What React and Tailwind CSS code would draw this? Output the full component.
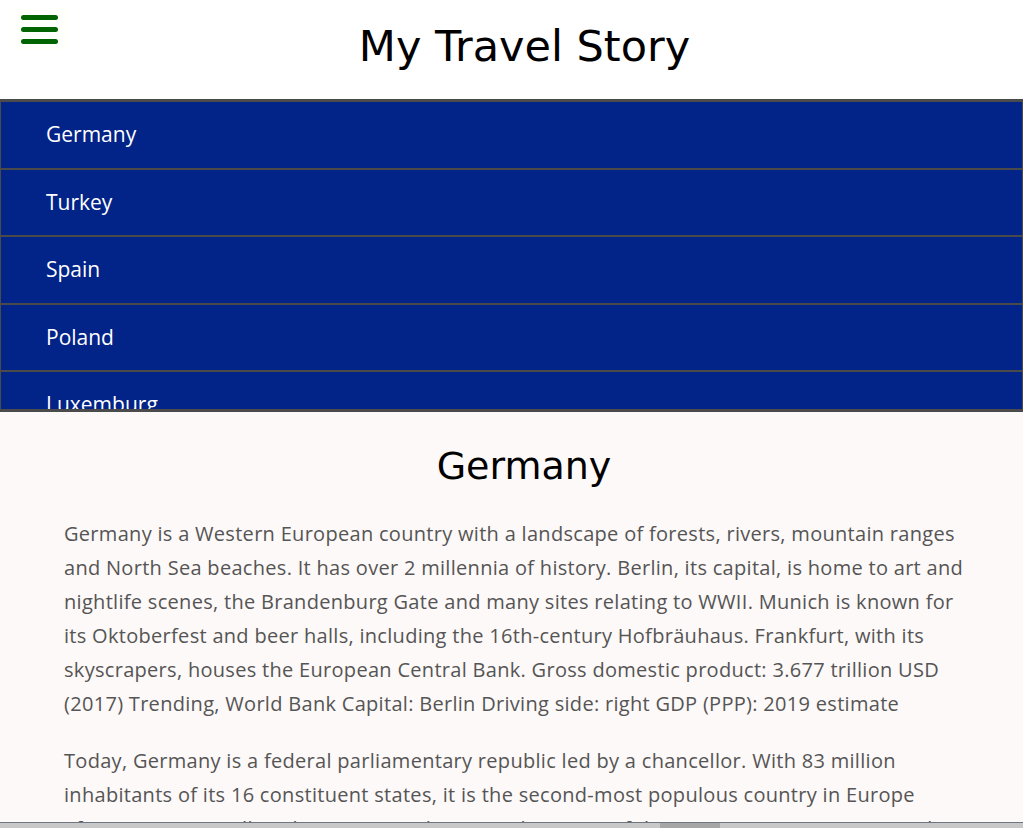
import React from 'react';

const countries = ['Germany', 'Turkey', 'Spain', 'Poland', 'Luxemburg', 'France', 'Italy'];

const paragraphs = [
  'Germany is a Western European country with a landscape of forests, rivers, mountain ranges and North Sea beaches. It has over 2 millennia of history. Berlin, its capital, is home to art and nightlife scenes, the Brandenburg Gate and many sites relating to WWII. Munich is known for its Oktoberfest and beer halls, including the 16th-century Hofbräuhaus. Frankfurt, with its skyscrapers, houses the European Central Bank. Gross domestic product: 3.677 trillion USD (2017) Trending, World Bank Capital: Berlin Driving side: right GDP (PPP): 2019 estimate',
  'Today, Germany is a federal parliamentary republic led by a chancellor. With 83 million inhabitants of its 16 constituent states, it is the second-most populous country in Europe after Russia, as well as the most populous member state of the European Union. Its capital and largest city is Berlin, while Frankfurt serves as its financial capital.',
];

const App = () => {
  return (
    <div className="h-screen flex flex-col overflow-hidden bg-[#fdf9f8]">
      {/* Header */}
      <header className="h-[99px] shrink-0 bg-white relative flex items-center justify-center">
        <button className="absolute left-[10px] top-[8px] w-[58px] h-[42px] flex flex-col items-center justify-center gap-[7px] bg-[#fffffb]">
          <span className="block w-[37px] h-[5px] rounded-full bg-[#006400]" />
          <span className="block w-[37px] h-[5px] rounded-full bg-[#006400]" />
          <span className="block w-[37px] h-[5px] rounded-full bg-[#006400]" />
        </button>
        <h1 className="ml-[26px] text-[43px] leading-none text-black -mt-[6px] font-['Comic_Sans_MS','DejaVu_Sans',sans-serif] font-normal">
          My Travel Story
        </h1>
      </header>

      {/* Country menu */}
      <nav className="h-[313px] shrink-0 overflow-hidden bg-[#022387] border-y-[3px] border-x border-[#4b4b4b]">
        {countries.map((c) => (
          <div
            key={c}
            className="h-[67.5px] flex items-center pl-[45px] border-b-2 border-[#4a4a4a] text-white text-[21px] font-['Open_Sans',sans-serif]"
          >
            {c}
          </div>
        ))}
      </nav>

      {/* Content */}
      <main className="flex-1 overflow-hidden pl-[64px] pr-[59px] pt-[35px]">
        <h2 className="text-center pl-[20px] text-[38px] leading-none text-black font-['Comic_Sans_MS','DejaVu_Sans',sans-serif] font-normal mb-[32px]">
          Germany
        </h2>
        {paragraphs.map((p, i) => (
          <p
            key={i}
            className="text-[20px] leading-[34px] tracking-[0.3px] text-[#555555] mb-[23px] font-['Open_Sans',sans-serif]"
          >
            {p}
          </p>
        ))}
      </main>

      {/* bottom scroll strip */}
      <div className="h-[6px] shrink-0 border-t border-[#6e7583] bg-[#c8c8c8] flex">
        <div className="ml-[660px] w-[60px] bg-[#a6a6a6]" />
      </div>
    </div>
  );
};

export default App;
